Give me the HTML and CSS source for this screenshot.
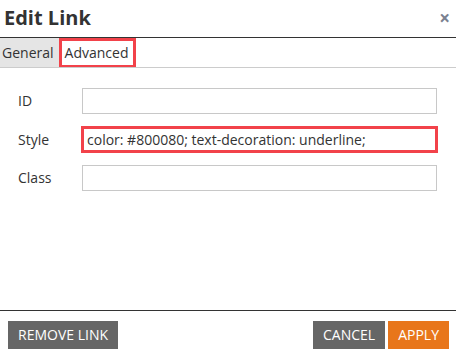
FILE: index.html
```html
<!DOCTYPE html>
<html>
<head>
<meta charset="utf-8">
<link rel="stylesheet" href="styles.css">
</head>
<body>
<div class="dialog">
  <div class="header">
    <div class="title">Edit Link</div>
    <div class="close">&times;</div>
  </div>
  <div class="tabs">
    <div class="tab">General</div>
    <div class="tab active">Advanced</div>
  </div>
  <div class="content">
    <div class="row">
      <label class="label">ID</label>
      <div class="input"></div>
    </div>
    <div class="row">
      <label class="label">Style</label>
      <div class="input highlight">color: #800080; text-decoration: underline;</div>
    </div>
    <div class="row">
      <label class="label">Class</label>
      <div class="input"></div>
    </div>
  </div>
  <div class="footer">
    <div class="btn gray">REMOVE LINK</div>
    <div class="spacer"></div>
    <div class="btn gray">CANCEL</div>
    <div class="btn orange">APPLY</div>
  </div>
</div>
</body>
</html>
```

FILE: styles.css
```css
html, body {
  margin: 0;
  padding: 0;
  background: #fff;
}
body {
  font-family: "Open Sans", "Noto Sans", sans-serif;
  color: #333;
  font-size: 14px;
}
.dialog {
  width: 456px;
  height: 355px;
  display: flex;
  flex-direction: column;
}
.header {
  height: 37px;
  border-bottom: 1px solid #333;
  display: flex;
  align-items: center;
  justify-content: space-between;
  padding: 0 6px 0 4px;
}
.title {
  font-size: 20px;
  font-weight: 700;
  line-height: 37px;
  margin-top: -2px;
}
.close {
  font-size: 19px;
  font-weight: 700;
  color: #7b8190;
  line-height: 19px;
  margin-top: 0px;
}
.tabs {
  height: 29px;
  border-bottom: 1px solid #ccc;
  display: flex;
}
.tab {
  line-height: 29px;
  padding: 0 5px 0 2px;
  background: #e5e5e5;
}
.tab.active {
  background: #fff;
  border: 3px solid #f2424a;
  border-bottom-width: 2px;
  line-height: 24px;
  padding: 0 5px 0 3px;
}
.content {
  flex: 1;
  padding-top: 20px;
  display: flex;
  flex-direction: column;
  gap: 12px;
}
.row {
  display: flex;
  align-items: center;
}
.label {
  width: 64px;
  padding-left: 18px;
  line-height: 26px;
}
.input {
  width: 353px;
  height: 24px;
  border: 1px solid #c8c8c8;
  line-height: 24px;
  white-space: nowrap;
}
.input.highlight {
  height: 21px;
  line-height: 21px;
  border: 3px solid #f2424a;
  margin-left: -1px;
  padding-left: 3px;
  width: 348px;
}
.footer {
  border-top: 1px solid #333;
  display: flex;
  padding: 10px 7px 6px 8px;
  gap: 3px;
}
.spacer {
  flex: 1;
}
.btn {
  height: 28px;
  line-height: 28px;
  color: #fff;
  padding: 0 10px;
}
.gray {
  background: #666;
}
.orange {
  background: #e8761b;
}
```
